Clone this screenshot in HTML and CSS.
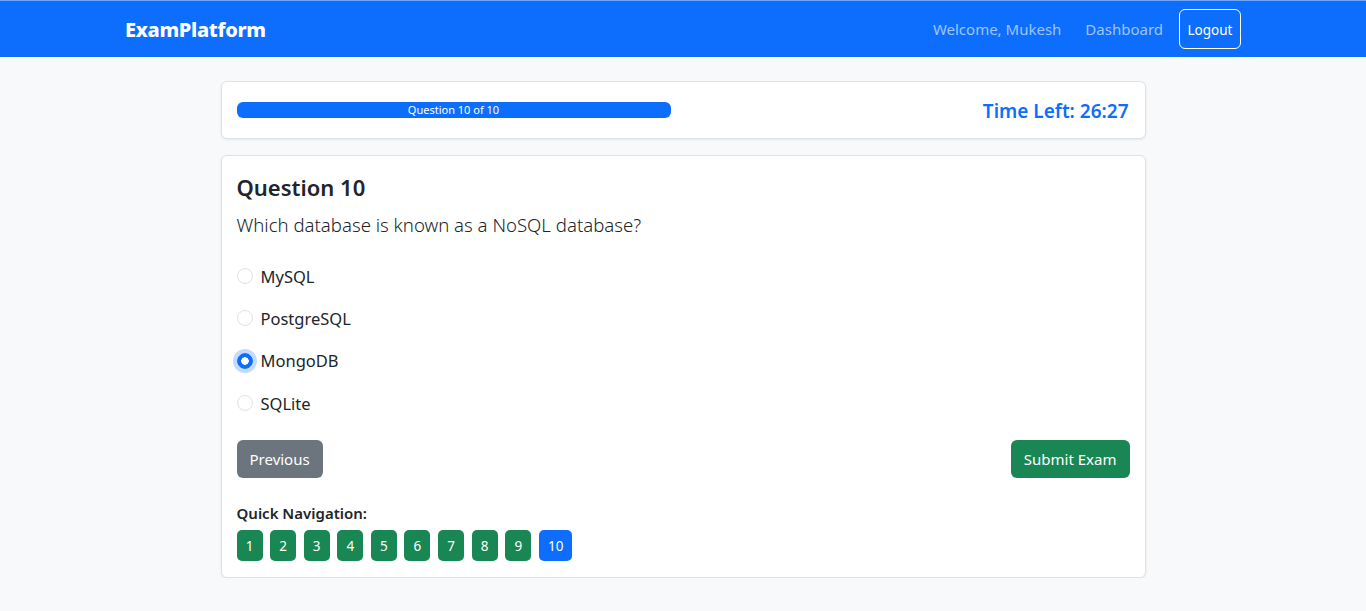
FILE: index.html
```html
<!DOCTYPE html>
<html lang="en">
<head>
<meta charset="utf-8">
<title>ExamPlatform</title>
<link rel="stylesheet" href="styles.css">
</head>
<body>
<nav class="navbar">
  <div class="nav-inner">
    <a class="brand" href="#">ExamPlatform</a>
    <div class="nav-right">
      <span class="nav-text">Welcome, Mukesh</span>
      <a class="nav-link" href="#">Dashboard</a>
      <button class="btn-logout">Logout</button>
    </div>
  </div>
</nav>

<main class="main">
  <section class="card status-card">
    <div class="progress">
      <div class="progress-bar">Question 10 of 10</div>
    </div>
    <div class="timer">Time Left: 26:27</div>
  </section>

  <section class="card question-card">
    <h2 class="q-title">Question 10</h2>
    <p class="q-text">Which database is known as a NoSQL database?</p>

    <div class="options">
      <label class="option"><span class="radio"></span><span>MySQL</span></label>
      <label class="option"><span class="radio"></span><span>PostgreSQL</span></label>
      <label class="option"><span class="radio checked"></span><span>MongoDB</span></label>
      <label class="option"><span class="radio"></span><span>SQLite</span></label>
    </div>

    <div class="actions">
      <button class="btn btn-secondary">Previous</button>
      <button class="btn btn-success">Submit Exam</button>
    </div>

    <div class="quick">
      <div class="quick-label">Quick Navigation:</div>
      <div class="quick-list">
        <button class="qbtn done">1</button>
        <button class="qbtn done">2</button>
        <button class="qbtn done">3</button>
        <button class="qbtn done">4</button>
        <button class="qbtn done">5</button>
        <button class="qbtn done">6</button>
        <button class="qbtn done">7</button>
        <button class="qbtn done">8</button>
        <button class="qbtn done">9</button>
        <button class="qbtn current">10</button>
      </div>
    </div>
  </section>
</main>
</body>
</html>
```

FILE: styles.css
```css
* { box-sizing: border-box; }

body {
  margin: 0;
  background: #f8f9fa;
  font-family: "Noto Sans", "Open Sans", sans-serif;
  color: #212529;
  font-size: 16px;
}

.navbar {
  background: #0d6efd;
  border-top: 1px solid #6fa6fb;
  height: 57px;
}

.nav-inner {
  max-width: 1140px;
  margin: 0 auto;
  padding: 0 12px;
  height: 56px;
  display: flex;
  align-items: center;
  justify-content: space-between;
}

.brand {
  color: #fff;
  text-decoration: none;
  font-weight: 800;
  font-size: 20px;
  letter-spacing: -0.3px;
  margin-top: 1px;
}

.nav-right {
  display: flex;
  align-items: center;
}

.nav-text, .nav-link {
  color: rgba(255, 255, 255, 0.6);
  font-size: 15px;
  text-decoration: none;
  margin-right: 24px;
}

.nav-link { margin-right: 16px; }

.btn-logout {
  font-family: inherit;
  background: transparent;
  color: #fff;
  border: 1px solid #fff;
  border-radius: 6px;
  font-size: 13.5px;
  height: 40px;
  width: 62px;
  padding: 2px 0 0;
}

.main {
  max-width: 925px;
  margin: 24px auto 0;
}

.card {
  background: #fff;
  border: 1px solid #dee2e6;
  border-radius: 6px;
  box-shadow: 0 1px 3px rgba(0, 0, 0, 0.08);
}

.status-card {
  height: 58px;
  padding: 0 15px;
  display: flex;
  align-items: center;
  justify-content: space-between;
}

.progress {
  width: 434px;
  height: 16px;
  border-radius: 6px;
  background: #e9ecef;
  overflow: hidden;
}

.progress-bar {
  width: 100%;
  height: 100%;
  background: #0d6efd;
  color: #fff;
  font-size: 11px;
  line-height: 16px;
  text-align: center;
}

.timer {
  color: #0d6efd;
  font-size: 19px;
  font-weight: 600;
  margin-top: 1px;
  margin-right: 1px;
}

.question-card {
  margin-top: 16px;
  padding: 15px 15px 16px;
}

.q-title {
  margin: 0;
  font-size: 22px;
  font-weight: 600;
  line-height: 32px;
}

.q-text {
  margin: 7px 0 0;
  font-size: 18.6px;
  font-weight: 300;
  line-height: 30px;
  color: #212529;
}

.options {
  margin-top: 15px;
}

.option {
  display: flex;
  align-items: center;
  height: 42.3px;
  font-size: 16.5px;
}

.radio {
  width: 16px;
  height: 16px;
  border-radius: 50%;
  border: 1px solid #dee2e6;
  background: #fff;
  margin-right: 8px;
  flex: none;
}

.radio.checked {
  border-color: #0d6efd;
  background: radial-gradient(circle, #fff 0 3.5px, #0d6efd 4px);
  box-shadow: 0 0 0 4px rgba(13, 110, 253, 0.25);
}

.actions {
  margin-top: 16px;
  display: flex;
  justify-content: space-between;
}

.btn {
  font-family: inherit;
  font-size: 15px;
  height: 38px;
  padding: 0 13px;
  border: none;
  border-radius: 6px;
  color: #fff;
}

.btn-secondary { background: #6c757d; }
.btn-success { background: #198754; }

.quick {
  margin-top: 24px;
}

.quick-label {
  font-size: 15px;
  font-weight: 600;
  line-height: 22px;
}

.quick-list {
  margin-top: 6px;
  display: flex;
  gap: 7.6px;
}

.qbtn {
  font-family: inherit;
  height: 31px;
  min-width: 26px;
  padding: 0 8px;
  border: none;
  border-radius: 5px;
  color: #fff;
  font-size: 13.5px;
}

.qbtn.done { background: #198754; }
.qbtn.current { background: #0d6efd; min-width: 33px; margin-left: 0.5px; }
```
